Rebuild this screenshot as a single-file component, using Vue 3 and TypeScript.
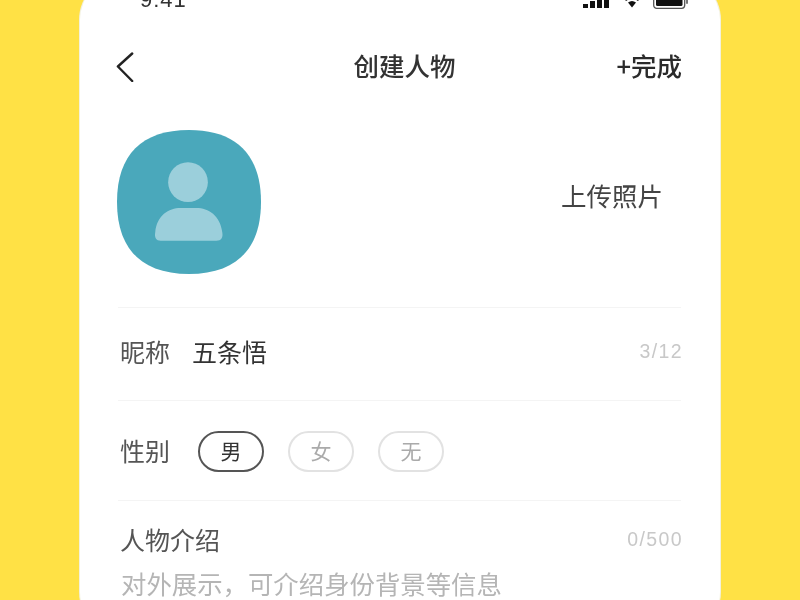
<script setup lang="ts">
const genders = [
  { label: '男', active: true },
  { label: '女', active: false },
  { label: '无', active: false },
]
</script>

<template>
  <div class="page">
    <div class="phone">
      <div class="status">
        <span class="time">9:41</span>
        <div class="status-icons">
          <svg class="bars" width="28" height="14" viewBox="0 0 28 14"><rect x="0" y="10" width="5" height="4" fill="#111"/><rect x="7" y="7" width="5" height="7" fill="#111"/><rect x="14" y="3" width="5" height="11" fill="#111"/><rect x="21" y="0" width="5" height="14" fill="#111"/></svg>
          <svg width="18" height="14" viewBox="0 0 18 14"><path d="M1 3.500Q9-2.500 17 3.500L15 6Q9 1.500 3 6ZM5 7.500Q9 4.500 13 7.500L9 12.500Z" fill="#111"/></svg>
          <svg width="36" height="16" viewBox="0 0 36 16"><rect x="0.700" y="0.700" width="31" height="14.600" rx="3" fill="none" stroke="#555" stroke-width="1.300"/><rect x="3" y="3" width="26.500" height="10" rx="1.500" fill="#111"/><rect x="33" y="5" width="2" height="6" rx="1" fill="#777"/></svg>
        </div>
      </div>

      <header class="nav">
        <svg class="back" width="20" height="30" viewBox="0 0 20 30"><path d="M17.200 1.500 2.900 14.500 17.200 29" fill="none" stroke="#222" stroke-width="2.400" stroke-linecap="round" stroke-linejoin="round"/></svg>
        <h1 class="title">创建人物</h1>
        <span class="done">+完成</span>
      </header>

      <section class="photo-row">
        <svg class="avatar" width="144" height="144" viewBox="0 0 145 145">
          <path d="M72.500 0C120 0 145 25 145 72.500S120 145 72.500 145 0 120 0 72.500 25 0 72.500 0Z" fill="#4aa8bb"/>
          <circle cx="71.500" cy="52.500" r="20" fill="#9bcfdb"/>
          <path d="M44 111.500C39.500 111.500 37.500 108.500 38.500 103 40 86 52 78.500 64 78.500H80C92 78.500 104 86 106 103 107 108.500 105 111.500 100 111.500Z" fill="#9bcfdb"/>
        </svg>
        <span class="upload">上传照片</span>
      </section>

      <div class="row name-row">
        <span class="label">昵称</span>
        <span class="value">五条悟</span>
        <span class="count">3/12</span>
      </div>

      <div class="row gender-row">
        <span class="label">性别</span>
        <div class="chips">
          <span v-for="g in genders" :key="g.label" class="chip" :class="{ active: g.active }">{{ g.label }}</span>
        </div>
      </div>

      <section class="intro">
        <div class="intro-head">
          <span class="label">人物介绍</span>
          <span class="count">0/500</span>
        </div>
        <p class="placeholder">对外展示，可介绍身份背景等信息</p>
      </section>
    </div>
  </div>
</template>

<style>
html, body { margin: 0; overflow: hidden; }
</style>

<style scoped>
.page {
  width: 800px;
  height: 600px;
  overflow: hidden;
  background: #ffe145;
  font-family: "Noto Sans CJK SC", "Liberation Sans", sans-serif;
}
.phone {
  box-sizing: border-box;
  width: 640px;
  height: 660px;
  margin: -24px 0 0 80px;
  padding: 0 39px 0 38px;
  background: #fff;
  border-radius: 44px;
  box-shadow: 0 0 0 1px #f3f1de;
  filter: blur(0.4px);
}
.status {
  height: 36px;
  display: flex;
  align-items: flex-end;
  justify-content: space-between;
  padding: 0 0 3px 22px;
  box-sizing: border-box;
}
.time {
  font: 22px/24px "Liberation Sans", sans-serif;
  letter-spacing: 1px;
  color: #333;
  margin-bottom: -3px;
}
.status-icons {
  display: flex;
  align-items: flex-end;
  gap: 12px;
  margin-right: -8px;
}
.bars { margin-bottom: 1px; }
.nav {
  height: 60px;
  margin-top: 25px;
  display: grid;
  grid-template-columns: 1fr auto 1fr;
  align-items: center;
}
.back { margin-left: -3px; display: block; }
.title {
  margin: 0;
  padding: 0 0 4px 10px;
  font-size: 25.500px;
  font-weight: 500;
  color: #333;
  line-height: 36px;
  white-space: nowrap;
}
.done {
  justify-self: end;
  margin-right: -1px;
  padding-bottom: 4px;
  font-size: 25.500px;
  font-weight: 500;
  color: #2b2b2b;
  line-height: 36px;
}
.photo-row {
  display: flex;
  align-items: center;
  justify-content: space-between;
  height: 203px;
  padding: 25px 0 33px;
  box-sizing: border-box;
  margin-top: 8px;
  border-bottom: 1px solid #f4f4f4;
}
.avatar { margin-left: -1px; display: block; }
.upload {
  font-size: 25.500px;
  color: #444;
  margin: 0 18px 16px 0;
}
.row {
  display: flex;
  align-items: center;
  box-sizing: border-box;
  border-bottom: 1px solid #f4f4f4;
}
.name-row { height: 93px; padding-bottom: 6px; }
.gender-row { height: 100px; padding-bottom: 2px; }
.label {
  font-size: 25px;
  color: #555;
  padding-left: 2px;
  line-height: 36px;
}
.value {
  margin-left: 22px;
  font-size: 25px;
  color: #333;
  line-height: 36px;
}
.count {
  margin: 0 -2px 0 auto;
  font: 19.500px/24px "Liberation Sans", sans-serif;
  color: #c8c8c8;
  letter-spacing: 1.400px;
}
.chips {
  display: flex;
  gap: 24px;
  margin: 4px 0 0 28px;
}
.chip {
  box-sizing: border-box;
  width: 66px;
  height: 41px;
  padding-bottom: 3px;
  border: 2px solid #e2e2e2;
  border-radius: 21px;
  display: flex;
  align-items: center;
  justify-content: center;
  font-size: 21px;
  color: #aaa;
}
.chip.active {
  border-color: #555;
  color: #333;
}
.intro { padding-top: 20px; }
.intro-head {
  display: flex;
  align-items: center;
  justify-content: space-between;
  height: 36px;
}
.placeholder {
  margin: 8px 0 0;
  padding-left: 3px;
  font-size: 25.400px;
  line-height: 36px;
  color: #b5b5b5;
  white-space: nowrap;
}
</style>
